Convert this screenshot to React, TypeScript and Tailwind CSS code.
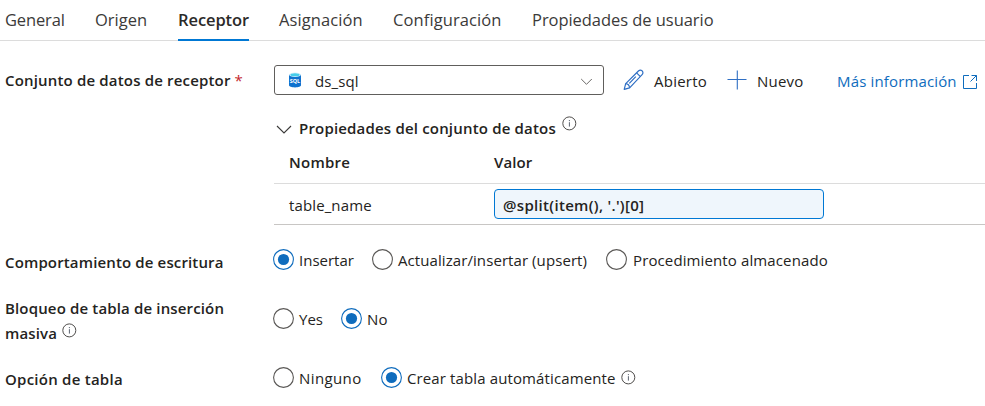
import React from "react";

function InfoIcon({ className = "" }: { className?: string }) {
  return (
    <svg className={`shrink-0 ${className}`} width="15" height="15" viewBox="0 0 15 15" fill="none">
      <circle cx="7.3" cy="7.4" r="6.5" stroke="#4f4d4b" strokeWidth="1" />
      <path d="M7.4 6.2V10.6" stroke="#5c6470" strokeWidth="1" />
      <circle cx="7.4" cy="4.6" r="0.65" fill="#5c6470" />
    </svg>
  );
}

function Radio({ checked = false }: { checked?: boolean }) {
  return (
    <svg className="shrink-0" width="21" height="21" viewBox="0 0 21 21" fill="none">
      <circle cx="10.5" cy="10.5" r="9.9" stroke={checked ? "#0f6cbd" : "#5a5856"} strokeWidth="1.1" />
      {checked && <circle cx="10.5" cy="10.5" r="5.6" fill="#0f6cbd" />}
    </svg>
  );
}

function SqlIcon() {
  return (
    <svg className="shrink-0" width="14" height="16" viewBox="0 0 14 16">
      <path d="M1 2.6v10.7c0 1.2 2.6 2.1 6 2.1s6-.9 6-2.1V2.6z" fill="#0f72cf" />
      <ellipse cx="7" cy="2.7" rx="6" ry="2.2" fill="#d9f3fa" />
      <ellipse cx="7" cy="2.8" rx="4.6" ry="1.5" fill="#45cdea" />
      <text x="7" y="10.8" textAnchor="middle" fontSize="5.4" letterSpacing="0" fontWeight="700" fill="#fff" fontFamily="Open Sans, sans-serif">
        SQL
      </text>
    </svg>
  );
}

function PencilIcon() {
  return (
    <svg className="shrink-0" width="22" height="22" viewBox="0 0 22 22" fill="none" stroke="#2f6fc4" strokeWidth="1.2" strokeLinejoin="round">
      <path d="M1.2 20.4l1.5-5.7L15.4 2c1.1-1.1 2.7-1.1 3.7-.2 1.1 1.1 1.1 2.7 0 3.8L6.6 18.8z" />
      <path d="M2.7 14.7c2 .2 3.6 1.8 3.9 4.1M13.6 3.8l3.8 3.8M12.8 7.6L6.3 14.4" />
    </svg>
  );
}

const tabs = [
  { label: "General", box: "w-[59px] mr-[31px] tracking-[-0.15px]" },
  { label: "Origen", box: "w-[52px] mr-[31px]" },
  { label: "Receptor", box: "w-[71px] mr-[30px]", active: true },
  { label: "Asignación", box: "w-[85px] mr-[29px] tracking-[0.1px]" },
  { label: "Configuración", box: "w-[109px] mr-[30px] tracking-[0.1px]" },
  { label: "Propiedades de usuario", box: "w-[183px] tracking-[-0.05px]" },
];

export default function App() {
  return (
    <div className="h-[406px] w-[985px] overflow-hidden bg-white font-['Open_Sans',sans-serif] text-[15px] leading-5 tracking-[0.12px] whitespace-nowrap text-[#242321]">
      <nav className="flex h-[41px] border-b border-[#dcdcdc] pl-[5px] text-[16.5px] leading-6 tracking-normal text-[#3b3a39]">
        {tabs.map((t) => (
          <div
            key={t.label}
            className={`h-[41px] shrink-0 pt-2 ${t.box} ${t.active ? "border-b-2 border-[#0078d4] font-semibold tracking-[-0.08px] text-[#2b2a29]" : ""}`}
          >
            {t.label}
          </div>
        ))}
      </nav>

      <section className="flex h-[194px] pl-[5px]">
        <div className="w-[269px] shrink-0 pt-[29px] font-semibold tracking-[0.17px]">
          Conjunto de datos de receptor <span className="font-normal text-[#c4262e]">*</span>
        </div>
        <div className="w-[711px] shrink-0 pt-6">
          <div className="flex h-[30px] items-center">
            <div className="flex h-[30px] w-[330px] shrink-0 items-center rounded-[3px] border border-[#605e5c] pl-[13px]">
              <SqlIcon />
              <span className="ml-[13px] w-[265px] pt-[2px]">ds_sql</span>
              <svg className="mt-[4px] shrink-0" width="13" height="8" viewBox="0 0 13 8" fill="none" stroke="#6b6967">
                <path d="M1.2 1l5.3 5.3L11.8 1" />
              </svg>
            </div>
            <div className="ml-[19px] w-[31px] shrink-0">
              <PencilIcon />
            </div>
            <span className="w-[73px] shrink-0 pt-[2px] tracking-[0.25px]">Abierto</span>
            <svg className="shrink-0" width="20" height="20" viewBox="0 0 20 20" stroke="#2f6fc4" strokeWidth="1.1">
              <path d="M.5 9.5h19M10.3 .5v19" />
            </svg>
            <span className="ml-[10px] w-[80px] shrink-0 pt-[2px] tracking-[0.2px]">Nuevo</span>
            <span className="w-[125px] shrink-0 pt-[2px] tracking-[0.15px] text-[#0f6cbd]">Más información</span>
            <svg className="mt-[3px] shrink-0" width="16" height="16" viewBox="0 0 16 16" fill="none" stroke="#0f6cbd">
              <path d="M7 1.5H1.5v13h13V9M9.5 1.5h5V7M14.5 1.5L8.5 7.5" />
            </svg>
          </div>

          <div className="mt-[19px] flex h-[30px] pt-[4px]">
            <svg className="mt-[7px] ml-[2px] shrink-0" width="16" height="9" viewBox="0 0 16 9" fill="none" stroke="#3b3a39" strokeWidth="1.1">
              <path d="M1 1l7 7 7-7" />
            </svg>
            <span className="ml-[7px] w-[263px] font-semibold tracking-[0.18px]">Propiedades del conjunto de datos</span>
            <InfoIcon className="mt-[-2px]" />
          </div>

          <div className="flex h-[40px] border-b border-[#dcdcdc] pt-[8px] pl-[15px] font-semibold tracking-[0.25px]">
            <span className="w-[205px]">Nombre</span>
            <span className="tracking-[0.1px]">Valor</span>
          </div>
          <div className="flex h-[41px] items-center border-b border-[#c8c6c4] pl-[15px]">
            <span className="w-[205px] pt-px">table_name</span>
            <div className="flex h-[30px] w-[330px] items-center rounded-sm border border-[#0078d4] bg-[#eff6fc] pt-px pl-2 font-semibold tracking-[0.32px]">
              @split(item(), '.')[0]
            </div>
          </div>
        </div>
      </section>

      <section className="flex h-[60px] pl-[5px]">
        <div className="w-[268px] shrink-0 pt-[17px] font-semibold tracking-[0.14px]">Comportamiento de escritura</div>
        <div className="mt-[14px] flex h-[22px] items-start">
          <Radio checked />
          <span className="ml-[5px] w-[73px] pt-px tracking-normal">Insertar</span>
          <Radio />
          <span className="ml-[5px] w-[208px] pt-px tracking-[0.08px]">Actualizar/insertar (upsert)</span>
          <Radio />
          <span className="ml-[6px] pt-px">Procedimiento almacenado</span>
        </div>
      </section>

      <section className="flex h-[59px] pl-[5px]">
        <div className="w-[268px] shrink-0 pt-[1px] font-semibold leading-[25px] tracking-[0.15px]">
          <div>Bloqueo de tabla de inserción</div>
          <div className="flex">
            <span className="w-[57px]">masiva</span>
            <InfoIcon className="mt-[2px]" />
          </div>
        </div>
        <div className="mt-[13px] flex h-[22px] items-start">
          <Radio />
          <span className="ml-[5px] w-[42px] pt-px tracking-normal">Yes</span>
          <Radio checked />
          <span className="ml-[5px] pt-px">No</span>
        </div>
      </section>

      <section className="flex h-[52px] pl-[5px]">
        <div className="w-[268px] shrink-0 pt-[15px] font-semibold tracking-[0.25px]">Opción de tabla</div>
        <div className="mt-[13px] flex h-[22px] items-start">
          <Radio />
          <span className="ml-[5px] w-[82px] pt-px tracking-[0.4px]">Ninguno</span>
          <Radio checked />
          <span className="ml-[5px] w-[214px] pt-px">Crear tabla automáticamente</span>
          <InfoIcon className="mt-[3px]" />
        </div>
      </section>
    </div>
  );
}
